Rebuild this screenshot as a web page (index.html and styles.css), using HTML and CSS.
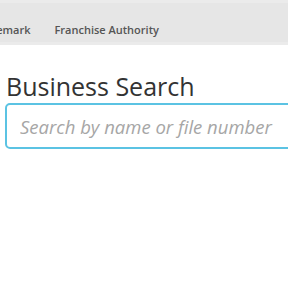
FILE: index.html
```html
<!DOCTYPE html>
<html lang="en">
<head>
  <meta charset="UTF-8" />
  <title>Business Search</title>
  <link rel="stylesheet" href="styles.css">
</head>
<body>
  <div class="topnav">
    <ul class="navList">
      <li>Trademark</li>
      <li>Franchise Authority</li>
    </ul>
  </div>

  <div class="searchBox">
    <h1>Business Search</h1>
    <input type="text" class="searchInput" placeholder="Search by name or file number" autofocus />
  </div>
</body>
</html>
```
FILE: styles.css
```css
body {
  margin: 0;
  font-family: 'Open Sans', sans-serif;
  background: #fff;
  color: #333;
}
.topnav {
  height: 45px;
  background: #e6e6e6;
  border-top: 3px solid #ebebeb;
  border-bottom: 3px solid #ebebeb;
  box-sizing: border-box;
  overflow: hidden;
}
.navList {
  display: flex;
  gap: 24px;
  margin: 0 0 0 -28px;
  padding: 20px 0 0;
  list-style: none;
  font-size: 11px;
  font-weight: 600;
  color: #555;
  line-height: 14px;
  white-space: nowrap;
}
.searchBox {
  padding: 25px 0 0 5px;
}
h1 {
  margin: 0 0 1px 1px;
  font-size: 25px;
  font-weight: 500;
  line-height: 32px;
}
.searchInput {
  width: 300px;
  height: 46px;
  box-sizing: border-box;
  padding: 0 13px;
  border: 2px solid #5bc3e3;
  border-radius: 5px;
  font-family: 'Open Sans', sans-serif;
  font-size: 18.5px;
  outline: none;
}
.searchInput::placeholder {
  font-style: italic;
  color: #a6a6a6;
}
```
